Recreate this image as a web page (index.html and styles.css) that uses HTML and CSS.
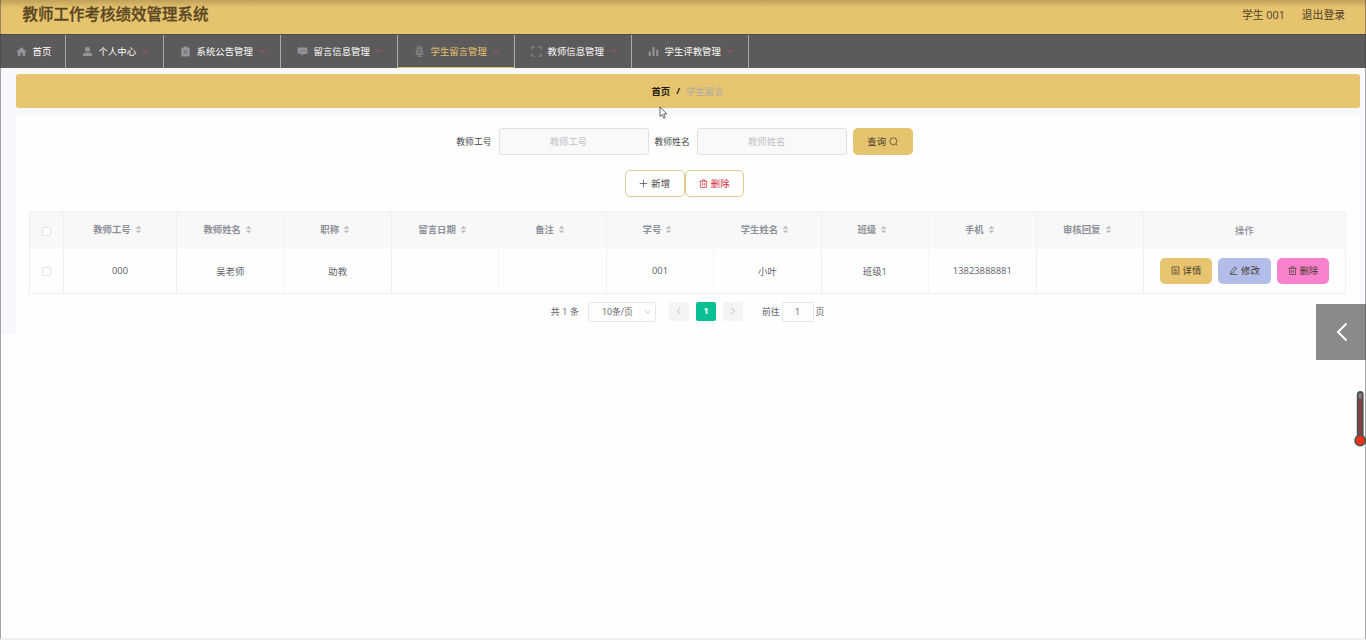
FILE: index.html
```html
<!DOCTYPE html>
<html lang="zh-CN">
  <head>
    <meta charset="UTF-8" />
    <meta name="viewport" content="width=device-width, initial-scale=1.0" />
    <title>教师工作考核绩效管理系统</title>
    <link rel="stylesheet" href="styles.css">
  </head>
  <body>
    <svg class="sprite">
      <symbol id="i-down" viewBox="0 0 8 8"><path d="M1 2.5l3 3 3-3" fill="none" stroke="currentColor" /></symbol>
      <symbol id="i-left" viewBox="0 0 8 8"><path d="M5.5 1L2.5 4l3 3" fill="none" stroke="currentColor" /></symbol>
      <symbol id="i-right" viewBox="0 0 8 8"><path d="M2.5 1l3 3-3 3" fill="none" stroke="currentColor" /></symbol>
      <symbol id="i-trash" viewBox="0 0 10 10"><path d="M.5 2.5h9M3.5 2.5v-1.5h3v1.5M1.8 2.5v7h6.4v-7M4 4.5v3M6 4.5v3" fill="none" stroke="currentColor" stroke-width=".8" /></symbol>
      <symbol id="i-sort" viewBox="0 0 8 10"><path d="M.8 4h6.4L4 .8zM.8 6h6.4L4 9.2z" fill="#b9bcc4" /></symbol>
    </svg>

    <header class="header">
      <h1>教师工作考核绩效管理系统</h1>
      <div class="user">
        <span>学生 001</span>
        <span>退出登录</span>
      </div>
    </header>

    <nav class="menu">
      <a class="home">
        <svg viewBox="0 0 12 12"><path d="M6 1L.6 6.2 2 7v4h2.8V7.6h2.4V11H10V7l1.400-.8z" fill="currentColor" /></svg>
        <span>首页</span>
      </a>
      <a class="center">
        <svg viewBox="0 0 12 12"><circle cx="6" cy="3.6" r="2.8" fill="currentColor" /><path d="M1 11V9.6Q1 7.4 3.6 7.4h4.8Q11 7.4 11 9.6V11z" fill="currentColor" /></svg>
        <span>个人中心</span>
        <svg class="arrow"><use href="#i-down" /></svg>
      </a>
      <a>
        <svg viewBox="0 0 12 12"><path d="M1.5 1.8h9v9.6h-9z" fill="currentColor" /><path d="M4 .6h4v2H4z" fill="currentColor" /><path d="M4.3 5l3.4 3.6M7.7 5L4.3 8.6" stroke="#5c5a5a" /></svg>
        <span>系统公告管理</span>
        <svg class="arrow"><use href="#i-down" /></svg>
      </a>
      <a>
        <svg viewBox="0 0 12 12"><path d="M.8 1.5h10.4v7H7.5L5 11V8.5H.8z" fill="currentColor" /><path d="M3 4.5h1.3v1.3H3zM5.4 4.5h1.3v1.3H5.4zM7.8 4.5h1.3v1.3H7.8z" fill="#5c5a5a" /></svg>
        <span>留言信息管理</span>
        <svg class="arrow"><use href="#i-down" /></svg>
      </a>
      <a class="active">
        <svg viewBox="0 0 12 12"><rect x="3.5" y=".8" width="5" height="7" rx="1" fill="none" stroke="currentColor" /><path d="M4 3h4M4 5.3h4M2.4 6v3.3h7.2V6M6 9.3v2M3.5 11.3h5" fill="none" stroke="currentColor" stroke-width=".8" /></svg>
        <span>学生留言管理</span>
        <svg class="arrow"><use href="#i-down" /></svg>
      </a>
      <a>
        <svg viewBox="0 0 12 12"><path d="M1 4V1h3M8 1h3v3M11 8v3H8M4 11H1V8" fill="none" stroke="currentColor" /></svg>
        <span>教师信息管理</span>
        <svg class="arrow"><use href="#i-down" /></svg>
      </a>
      <a>
        <svg viewBox="0 0 12 12"><path d="M.8 6H3v5H.8zM4.9 1.2h2.2V11H4.9zM9 4h2.2v7H9z" fill="currentColor" /></svg>
        <span>学生评教管理</span>
        <svg class="arrow"><use href="#i-down" /></svg>
      </a>
    </nav>

    <main class="page">
      <div class="breadcrumb"><b>首页</b><b class="sep">/</b><span>学生留言</span></div>

      <section class="content">
        <div class="search">
          <label>教师工号</label>
          <input type="text" placeholder="教师工号" />
          <label>教师姓名</label>
          <input type="text" placeholder="教师姓名" />
          <button class="btn query">查询
            <svg viewBox="0 0 10 10"><circle cx="4.8" cy="4.7" r="3.9" fill="none" stroke="currentColor" stroke-width=".8" /><path d="M7.4 7.6l1.8 1.8" stroke="currentColor" stroke-width=".8" /></svg>
          </button>
        </div>

        <div class="tools">
          <button class="btn plain"><svg viewBox="0 0 10 10"><path d="M5 .8v8.4M.8 5h8.4" stroke="currentColor" stroke-width=".8" /></svg>新增</button>
          <button class="btn plain danger"><svg><use href="#i-trash" /></svg>删除</button>
        </div>

        <table class="list">
          <colgroup>
            <col class="c-check" /><col class="c-no" />
            <col /><col /><col /><col /><col /><col /><col /><col /><col />
            <col class="c-action" />
          </colgroup>
          <thead>
            <tr>
              <th><i class="box"></i></th>
              <th class="sortable">教师工号<svg><use href="#i-sort" /></svg></th>
              <th class="sortable">教师姓名<svg><use href="#i-sort" /></svg></th>
              <th class="sortable">职称<svg><use href="#i-sort" /></svg></th>
              <th class="sortable">留言日期<svg><use href="#i-sort" /></svg></th>
              <th class="sortable">备注<svg><use href="#i-sort" /></svg></th>
              <th class="sortable">学号<svg><use href="#i-sort" /></svg></th>
              <th class="sortable">学生姓名<svg><use href="#i-sort" /></svg></th>
              <th class="sortable">班级<svg><use href="#i-sort" /></svg></th>
              <th class="sortable">手机<svg><use href="#i-sort" /></svg></th>
              <th class="sortable">审核回复<svg><use href="#i-sort" /></svg></th>
              <th class="action-title">操作</th>
            </tr>
          </thead>
          <tbody>
            <tr>
              <td><i class="box"></i></td>
              <td>000</td>
              <td>吴老师</td>
              <td>助教</td>
              <td></td>
              <td></td>
              <td>001</td>
              <td>小叶</td>
              <td>班级1</td>
              <td>13823888881</td>
              <td></td>
              <td>
                <div class="actions">
                  <button class="btn detail"><svg viewBox="0 0 10 10"><path d="M1.2 1h7.6v8H1.2zM3 3.5h3M3 5.2h4M3 7h4" fill="none" stroke="currentColor" stroke-width=".8" /></svg>详情</button>
                  <button class="btn edit"><svg viewBox="0 0 10 10"><path d="M6.5 1l2 1.500-4.300 5.300-2.500.9.400-2.500zM1.500 9.400H9" fill="none" stroke="currentColor" stroke-width=".8" /></svg>修改</button>
                  <button class="btn remove"><svg><use href="#i-trash" /></svg>删除</button>
                </div>
              </td>
            </tr>
          </tbody>
        </table>

        <div class="pagination">
          <span class="total">共 1 条</span>
          <span class="size">10条/页<svg><use href="#i-down" /></svg></span>
          <span class="pg"><svg><use href="#i-left" /></svg></span>
          <span class="pg current">1</span>
          <span class="pg"><svg><use href="#i-right" /></svg></span>
          <span class="goto">前往</span>
          <span class="jump">1</span>
          <span>页</span>
        </div>
      </section>
    </main>

    <div class="drawer"><svg viewBox="0 0 12 20"><path d="M10.5 1.5L2 10l8.5 8.5" fill="none" stroke="#fff" stroke-width="2" /></svg></div>
    <svg class="thermo" viewBox="0 0 12 56">
      <rect x="3.7" y="1" width="5" height="46" rx="2.5" fill="#8f3f41" stroke="#46524f" stroke-width="1.8" />
      <path d="M6.2 2.500v5" stroke="#7d8588" stroke-width="3" />
      <circle cx="6.2" cy="49.5" r="5.2" fill="#e8331c" stroke="#56504b" stroke-width="1.5" />
    </svg>
    <svg class="cursor" viewBox="0 0 9 13"><path d="M1 .8v9.7l2.200-2 1.600 3.700 1.500-.7-1.600-3.500h3z" fill="#fff" stroke="#444" stroke-width=".8" /></svg>
    <div class="edge"></div>
  </body>
</html>
```
FILE: styles.css
```css
* {
  box-sizing: border-box;
}

html,
body {
  height: 100%;
  margin: 0;
  overflow: hidden;
}

body {
  font-family: "Open Sans", "Noto Sans CJK SC", sans-serif;
  font-size: 9.4px;
  color: #606266;
  background: #fefefe;
}

button,
input {
  font-family: inherit;
  font-size: inherit;
}

.sprite {
  display: none;
}

.header {
  height: 34px;
  padding: 0 21px 6px 22.5px;
  display: flex;
  align-items: center;
  justify-content: space-between;
  background: linear-gradient(#c09f5a, #e6c46f 8px);
}

.header h1 {
  margin: 0;
  font-size: 15.5px;
  line-height: 28px;
  font-weight: 500;
  -webkit-text-stroke: 0.3px;
  color: #5b4622;
}

.user {
  display: flex;
  gap: 17px;
  font-size: 10.8px;
  color: #4f4025;
}

.menu {
  height: 34px;
  display: flex;
  background: #5c5a5a;
  border-top: 1px solid #504c48;
}

.menu a {
  width: 117px;
  padding: 0 0 1px 16px;
  display: flex;
  align-items: center;
  color: #fff;
  border-right: 1px solid #aaa;
}

.menu a.home {
  width: 66px;
}

.menu a.center {
  width: 98px;
}

.menu svg {
  width: 11px;
  height: 11px;
  margin-right: 5.5px;
  color: #94959b;
}

.menu .arrow {
  width: 8px;
  height: 8px;
  margin: 0 0 0 5px;
  color: #b05a5e;
}

.menu a.active {
  padding-bottom: 0;
  color: #e6c46f;
  border-bottom: 1px solid #e6c46f;
}

.page {
  height: 266px;
  padding: 6px 6px 0 16px;
  background: #f7f8fb;
}

.breadcrumb {
  height: 34px;
  padding: 0 1px 1px 0;
  display: flex;
  align-items: center;
  justify-content: center;
  background: #e6c470;
  border-radius: 3px;
  color: #a9aaa9;
}

.breadcrumb b {
  color: #1d190f;
}

.breadcrumb .sep {
  margin: 0 6px;
}

.content {
  height: 219px;
  margin-top: 7px;
  padding: 13px 13px 0;
  background: #fefefe;
}

.search {
  height: 27px;
  display: flex;
  align-items: center;
  justify-content: center;
  margin-right: 7px;
}

.search label {
  font-size: 8.8px;
  margin-right: 7px;
  color: #444;
}

.search input {
  width: 150px;
  height: 27px;
  padding: 0 10px 0 0;
  margin-right: 6px;
  text-align: center;
  background: #f9f9f9;
  border: 1px solid #e1e2e5;
  border-radius: 3px;
}

.search input::placeholder {
  color: #bfc1c6;
}

.btn {
  height: 27px;
  padding: 0 0 1px;
  display: flex;
  align-items: center;
  justify-content: center;
  gap: 3px;
  border: 0;
  border-radius: 5px;
  color: #443b2c;
}

.btn svg {
  width: 9px;
  height: 9px;
}

.query {
  width: 60px;
  background: #e6c46f;
}

.tools {
  display: flex;
  justify-content: center;
  margin: 15px 7px 14px 0;
}

.plain {
  width: 59.5px;
  background: #fff;
  border: 1px solid #e0cd94;
  color: #444;
}

.plain.danger {
  color: #d5273c;
}

.list {
  width: 1317px;
  table-layout: fixed;
  border-collapse: collapse;
}

.c-check {
  width: 34px;
}

.c-no {
  width: 113px;
}

.c-action {
  width: 202px;
}

.list th,
.list td {
  padding: 0;
  text-align: center;
  border: 1px solid #eeeff1;
}

.list th {
  height: 37px;
  color: #8d9097;
  background: #f8f8f9;
  border-bottom: 0;
}

.list td {
  height: 45px;
  border-top: 0;
}

.list th.sortable {
  padding: 0 5px 2px 0;
}

.list th svg {
  width: 7px;
  height: 9px;
  margin-left: 4px;
  vertical-align: -1px;
}

/* fainter dividers inside the grouped columns */
.list tr > :nth-child(4),
.list tr > :nth-child(6),
.list tr > :nth-child(8),
.list tr > :nth-child(10) {
  border-left-color: #f6f6f8;
}

.list tr > :nth-child(3),
.list tr > :nth-child(5),
.list tr > :nth-child(7),
.list tr > :nth-child(9) {
  border-right-color: #f6f6f8;
}

.list .action-title {
  font-weight: 500;
}

.box {
  display: block;
  width: 9px;
  height: 9px;
  margin: 2px auto 0;
  background: #fff;
  border: 1px solid #e2e4e8;
  border-radius: 1px;
}

.actions {
  display: flex;
  justify-content: center;
  gap: 6px;
}

.actions .btn {
  width: 52.5px;
  height: 26px;
}

.detail {
  background: #e6c470;
}

.edit {
  background: #b2bdea;
}

.remove {
  background: #fa82cd;
}

.pagination {
  height: 20px;
  margin: 8px 1px 0 0;
  display: flex;
  align-items: center;
  justify-content: center;
  font-size: 8.8px;
  line-height: 18px;
}

.pagination > span {
  padding-bottom: 1px;
}

.pagination .total {
  word-spacing: 0.5px;
}

.pagination .size {
  width: 68px;
  height: 20px;
  margin: 0 13px 0 9px;
  padding: 0 4px 1px 13px;
  display: flex;
  align-items: center;
  justify-content: space-between;
  border: 1px solid #e6e7eb;
  border-radius: 2px;
}

.pagination svg {
  width: 8px;
  height: 8px;
  color: #b9bcc3;
}

.size svg {
  width: 7px;
}

.pg {
  width: 20px;
  height: 19px;
  margin: 0 7px 1px 0;
  display: flex;
  align-items: center;
  justify-content: center;
  background: #f4f4f5;
  border-radius: 2px;
}

.pg.current {
  background: #08bf91;
  color: #fff;
  font-weight: bold;
}

.goto {
  margin-left: 12px;
}

.jump {
  width: 32px;
  height: 20px;
  margin: 0 2px;
  text-align: center;
  border: 1px solid #e6e7eb;
  border-radius: 2px;
}

.drawer {
  position: absolute;
  top: 304px;
  right: 0;
  width: 50px;
  height: 56px;
  padding-left: 2px;
  display: flex;
  align-items: center;
  justify-content: center;
  background: #8a8a8a;
}

.drawer svg {
  width: 12px;
  height: 20px;
}

.thermo {
  position: absolute;
  top: 391px;
  right: 0;
  width: 12px;
  height: 56px;
}

.cursor {
  position: absolute;
  top: 106px;
  left: 659px;
  width: 9px;
  height: 13px;
}

/* thin window frame around the page */
.edge {
  position: absolute;
  inset: 0;
  border: 1px solid rgba(60, 60, 65, 0.45);
  border-top: 0;
  border-bottom: 2px solid #f1f1f1;
  pointer-events: none;
}
```
